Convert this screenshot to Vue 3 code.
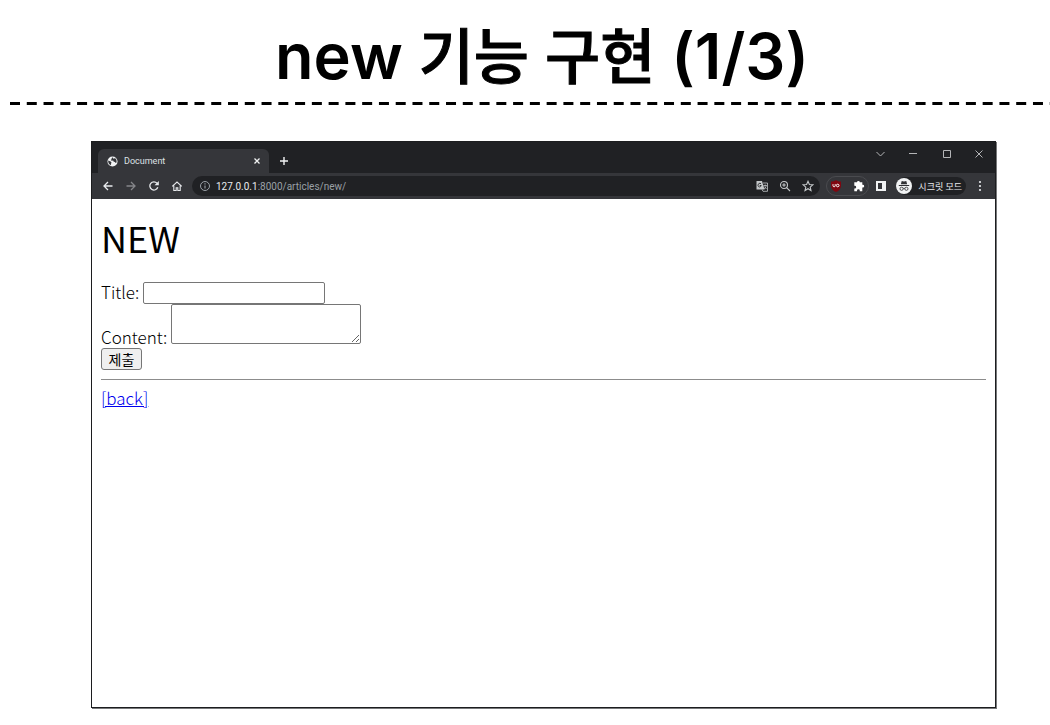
<script setup>
import { ref } from 'vue'

const title = ref('')
const content = ref('')
const address = { host: '127.0.0.1', rest: ':8000/articles/new/' }
</script>

<template>
  <main class="slide">
    <h1 class="slide-title">new <span class="hangul">기능 구현</span> (1/3)</h1>
    <svg class="divider" aria-hidden="true">
      <line x1="0" y1="1.5" x2="100%" y2="1.5" stroke="#000" stroke-width="3" stroke-dasharray="10 6.77" />
    </svg>

    <section class="browser">
      <header class="tabs">
        <div class="tab">
          <svg class="globe" viewBox="0 0 12 12" aria-hidden="true">
            <circle cx="6" cy="6" r="5.5" fill="#f1f3f4" />
            <path d="M1.300 5 4 6l1 1.300-.7 1.200v1.700C2.300 9.500 1 7.500 1.300 5zM6 1.300 5 2.700v.8l-1 .9 1.200.8 1.500-.2.6 1.200 1.500.3.4 1.200 1.200-.5C10.800 5 10 3.300 8.500 2.300L7.500 3.300z" fill="#35363a" />
          </svg>
          <span class="tab-name">Document</span>
          <button class="icon" aria-label="Close tab">
            <svg viewBox="0 0 12 12" class="s12"><path d="M3.500 3.500l5 5M8.500 3.500l-5 5" stroke="#f1f3f4" stroke-width="1.300" /></svg>
          </button>
        </div>
        <button class="icon new-tab" aria-label="New tab">
          <svg viewBox="0 0 12 12" class="s12"><path d="M6 2v8M2 6h8" stroke="#f1f3f4" stroke-width="1.400" /></svg>
        </button>
        <div class="window-controls">
          <button class="icon" aria-label="Search tabs"><svg viewBox="0 0 12 12" class="s12"><path d="M2.500 4 6.500 8l4-4" class="thin" /></svg></button>
          <button class="icon" aria-label="Minimize"><svg viewBox="0 0 12 12" class="s12"><path d="M2 5.500h8" class="thin" /></svg></button>
          <button class="icon" aria-label="Maximize"><svg viewBox="0 0 12 12" class="s12"><path d="M3.500 2.500h7v7h-7z" class="thin" /></svg></button>
          <button class="icon" aria-label="Close"><svg viewBox="0 0 12 12" class="s12"><path d="M2.500 2.500l7 7M9.500 2.500l-7 7" class="thin" /></svg></button>
        </div>
      </header>

      <nav class="toolbar">
        <div class="nav-buttons">
          <button class="icon" aria-label="Back"><svg viewBox="0 0 12 12" class="s12"><path d="M10.500 6H2M6 2 2 6l4 4" class="line" /></svg></button>
          <button class="icon" aria-label="Forward"><svg viewBox="0 0 12 12" class="s12"><path d="M1.500 6H10M6 2l4 4-4 4" class="line dim" /></svg></button>
          <button class="icon" aria-label="Reload"><svg viewBox="0 0 12 12" class="s12"><path d="M9.800 7.300A4.100 4.100 0 1 1 9 3.200" class="line" /><path d="M10.800 1v4.300H6.500z" fill="#e8eaed" /></svg></button>
          <button class="icon" aria-label="Home"><svg viewBox="0 0 12 12" class="s12"><path d="M1.200 6.300 6 2l4.800 4.300M2.800 5.500v5h2.400V7.700h1.600v2.800h2.400v-5" class="line house" /></svg></button>
        </div>
        <div class="address">
          <svg viewBox="0 0 12 12" class="s12" aria-hidden="true"><circle cx="6" cy="6" r="4.500" fill="none" stroke="#9aa0a6" /><path d="M6 5.500v3M6 3.300v1.200" stroke="#9aa0a6" stroke-width="1.100" /></svg>
          <span class="url"><b>{{ address.host }}</b>{{ address.rest }}</span>
          <button class="icon" aria-label="Translate">
            <svg viewBox="0 0 12 12" class="s12"><path d="M.5 1H6l2.500 8.500h-8z" fill="#c4c7c9" /><path d="M7 3h4.500v8.300H7l-1-1.800M7.500 5.500h3.300M9.200 4.500v1M8 9c1.300-.8 2-2 2.200-3.500M8.300 6.500 10.500 9" fill="none" stroke="#c4c7c9" stroke-width=".8" /><path d="M5 3.700C3.800 2.700 2 3.500 2 5.300s2.500 2.500 3.200.2H3.700" fill="none" stroke="#202124" stroke-width=".9" /></svg>
          </button>
          <button class="icon" aria-label="Zoom">
            <svg viewBox="0 0 12 12" class="s12"><circle cx="5" cy="5" r="3.500" class="pale" /><path d="M7.600 7.600l3.400 3.400M3.200 5h3.600M5 3.200v3.600" class="pale" /></svg>
          </button>
          <button class="icon" aria-label="Bookmark">
            <svg viewBox="0 0 12 12" class="s12"><path d="M6 1.300l1.400 3.200 3.400.3-2.600 2.300.8 3.400L6 8.700l-3 1.800.8-3.400L1.200 4.800l3.400-.3z" class="pale" /></svg>
          </button>
        </div>
        <div class="extensions">
          <button class="icon" aria-label="uBlock Origin">
            <svg viewBox="0 0 12 12" class="s12"><path d="M6 0c1.500 1 3 1.500 5 1.500v4C11 9 9 10.700 6 12 3 10.700 1 9 1 5.500v-4C3 1.500 4.500 1 6 0z" fill="#800610" /><path d="M3 4.200v1.500c0 1.500 2.200 1.500 2.200 0V4.200" fill="none" stroke="#fff" stroke-width="1" /><circle cx="7.700" cy="5.500" r="1.300" fill="none" stroke="#fff" stroke-width="1" /></svg>
          </button>
          <button class="icon" aria-label="Extensions">
            <svg viewBox="0 0 12 12" class="s12"><path d="M4 2.300a1.400 1.400 0 0 1 2.800 0H9.300v2.500h.5a1.400 1.400 0 0 1 0 2.800h-.5V11.300H6.800v-.6a1.400 1.400 0 0 0-2.800 0v.6H1.300V8.600h.5a1.400 1.400 0 0 0 0-2.800h-.5V2.300z" fill="#fff" /></svg>
          </button>
        </div>
        <button class="icon" aria-label="Side panel">
          <svg viewBox="0 0 12 12" class="s12"><path d="M1 1h10v10H1zM3 3v6h4V3z" fill="#f1f3f4" fill-rule="evenodd" /></svg>
        </button>
        <button class="profile">
          <svg viewBox="0 0 16 16" class="s16" aria-hidden="true"><circle cx="8" cy="8" r="8" fill="#f1f3f4" /><path d="M5.700 3 8 3.400l2.300-.4.8 3.300H4.900zM2.800 7h10.400v1H2.800z" fill="#303134" /><path d="M7.200 10.500q.8-.6 1.600 0" fill="none" stroke="#303134" stroke-width=".8" /><circle cx="5.600" cy="10.800" r="1.600" fill="none" stroke="#303134" stroke-width=".8" /><circle cx="10.400" cy="10.800" r="1.600" fill="none" stroke="#303134" stroke-width=".8" /></svg>
          <span>시크릿 모드</span>
        </button>
        <button class="icon" aria-label="Menu">
          <svg viewBox="0 0 12 12" class="s12" fill="#e8eaed"><circle cx="6" cy="2" r="1.100" /><circle cx="6" cy="6" r="1.100" /><circle cx="6" cy="10" r="1.100" /></svg>
        </button>
      </nav>

      <article class="page">
        <h2>NEW</h2>
        <form @submit.prevent>
          <div class="row">
            <label for="title">Title:</label>
            <input id="title" v-model="title" type="text" />
          </div>
          <div>
            <label for="content">Content: </label>
            <textarea id="content" v-model="content"></textarea>
          </div>
          <button class="submit" type="submit">제출</button>
        </form>
        <hr />
        <a href="#">[back]</a>
      </article>
    </section>
  </main>
</template>

<style>
body {
  margin: 0;
  background: #fff;
}
</style>

<style scoped>
.slide {
  display: flex;
  flex-direction: column;
  min-height: 100vh;
  box-sizing: border-box;
  padding: 16px 0 17px;
  color: #000;
}
.slide-title {
  margin: 0 0 6px;
  padding-left: 34px;
  font: 600 63px/80px Inter, "Noto Sans CJK KR", sans-serif;
  font-variant-ligatures: no-contextual;
  text-align: center;
}
.hangul {
  font-size: 60px;
  font-weight: 500;
  line-height: 60px;
  -webkit-text-stroke: 1px #000;
}
.divider {
  display: block;
  align-self: flex-end;
  width: calc(100% - 10px);
  height: 3px;
}
.browser {
  flex: 1;
  display: flex;
  flex-direction: column;
  margin: 36px 54px 0 91px;
  border: 1px solid #1c1d1f;
  box-shadow: 1px 1px 0 #77787a;
  font-family: Roboto, "Noto Sans CJK KR", sans-serif;
}
button {
  font-family: inherit;
}
.icon {
  display: flex;
  padding: 0;
  border: 0;
  background: none;
}
.s12 {
  width: 12px;
  height: 12px;
  flex: none;
}
.s16 {
  width: 16px;
  height: 16px;
  flex: none;
}
.thin {
  fill: none;
  stroke: #b4b5b7;
  stroke-width: 1;
}
.line {
  fill: none;
  stroke: #e8eaed;
  stroke-width: 1.3;
}
.house {
  stroke-width: 1.1;
}
.dim {
  stroke: #85868a;
}
.pale {
  fill: none;
  stroke: #c4c7c9;
  stroke-width: 1.1;
}
.tabs {
  display: flex;
  align-items: flex-end;
  height: 31px;
  background: #202124;
}
.tab {
  display: flex;
  align-items: center;
  gap: 6px;
  box-sizing: border-box;
  width: 171px;
  height: 24px;
  margin-left: 6px;
  padding: 0 6px 0 9px;
  border-radius: 6px 6px 0 0;
  background: #35363a;
  color: #dfe1e5;
  font-size: 9px;
}
.globe {
  width: 11px;
  height: 11px;
}
.tab-name {
  flex: 1;
}
.new-tab {
  margin: 0 0 6px 9px;
}
.window-controls {
  display: flex;
  gap: 21px;
  margin: 0 10px 13px auto;
}
.toolbar {
  display: flex;
  align-items: center;
  box-sizing: border-box;
  height: 26px;
  padding: 0 9px 0 10px;
  background: #35363a;
}
.nav-buttons {
  display: flex;
  gap: 11px;
}
.address {
  flex: 1;
  display: flex;
  align-items: center;
  gap: 11px;
  height: 20px;
  margin-left: 9px;
  padding: 0 6px 0 7px;
  border-radius: 10px;
  background: #202124;
}
.url {
  flex: 1;
  margin-left: -6px;
  color: #9aa0a6;
  font-size: 10px;
}
.url b {
  color: #e8eaed;
  font-weight: 400;
}
.extensions {
  display: flex;
  gap: 11px;
  margin: 0 6px;
  padding: 3px 3px;
  border: 1px solid #4a4b4f;
  border-radius: 10px;
}
.profile {
  display: flex;
  align-items: center;
  gap: 6px;
  height: 18px;
  margin: 0 8px 0 9px;
  padding: 0 4px 0 0;
  border: 0;
  border-radius: 9px;
  background: #202124;
  color: #e8eaed;
  font-size: 9px;
}
.page {
  padding: 0 9px 0 9px;
  font: 300 17px/22px "Noto Sans CJK KR", sans-serif;
}
h2 {
  margin: 0;
  padding: 18px 0 25px;
  font-size: 36px;
  font-weight: 400;
  line-height: 40px;
}
.row {
  display: flex;
  align-items: flex-start;
  gap: 4px;
}
.row label {
  line-height: 20px;
}
input,
textarea {
  box-sizing: border-box;
  margin: 0;
  border: 1px solid #767676;
  border-radius: 2px;
  background: #fff;
}
input {
  width: 182px;
  height: 22px;
}
textarea {
  width: 190px;
  height: 40px;
}
.submit {
  display: block;
  box-sizing: border-box;
  width: 41px;
  height: 22px;
  padding: 0;
  border: 1px solid #767676;
  border-radius: 3px;
  background: #efefef;
  color: #000;
  font-size: 14px;
  line-height: 18px;
}
hr {
  margin: 9px 0 7px;
  border: 0;
  border-top: 1px solid #8c8c8c;
}
a {
  color: #0000ee;
}
</style>
